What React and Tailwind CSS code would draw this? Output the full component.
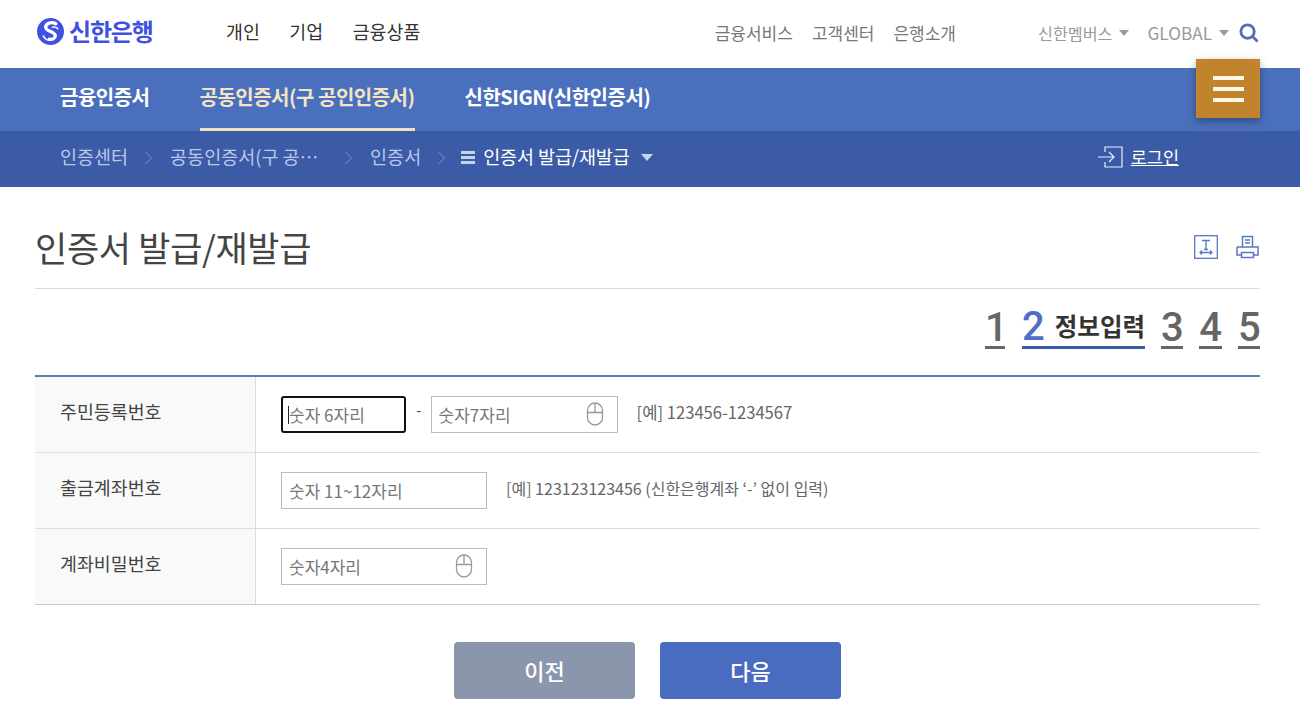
import React from 'react';

const FONT = "font-['Noto_Sans_CJK_KR','Noto_Sans',sans-serif]";
const DIGIT = "font-['Roboto','Noto_Sans_CJK_KR',sans-serif]";

const GNB = ['개인', '기업', '금융상품'];
const UTIL = ['금융서비스', '고객센터', '은행소개'];

function Logo() {
  return (
    <div className="flex items-center gap-[5px]">
      <svg width="27" height="27" viewBox="0 0 28 28">
        <circle cx="14" cy="14" r="14" fill="#3f51e0" />
        <path d="M19.500 6C15 3.500 9 5.500 9 9.500c0 4.500 10 4.500 10 9 0 2.500-3 4-6 3.500" fill="none" stroke="#fff" strokeWidth="3.400" strokeLinecap="round" />
        <path d="M6.500 18.500c1.500 3 4 4.500 6.500 4.500M16 9.500c2-.5 4 0 5.500 1.500" fill="none" stroke="#fff" strokeWidth="1.600" strokeLinecap="round" />
      </svg>
      <span className="text-[24px] leading-none font-bold tracking-[-1.2px] text-[#3f51e0]">신한은행</span>
    </div>
  );
}

function Caret({ className }) {
  return <span className={`inline-block w-0 h-0 border-x-[5px] border-x-transparent border-t-[6px] ${className}`} />;
}

function Chevron() {
  return (
    <svg width="10" height="14" viewBox="0 0 10 14" fill="none" stroke="#5f7cbd" strokeWidth="1.300">
      <path d="M1.500 1l6 6-6 6" />
    </svg>
  );
}

function MouseIcon() {
  return (
    <svg width="18" height="24" viewBox="0 0 18 24" fill="none" stroke="#999" strokeWidth="1.300">
      <rect x="1.500" y="1" width="15" height="22" rx="7.500" />
      <path d="M1.500 10.500h15M9 1v9.500" />
    </svg>
  );
}

function Step({ n, className }) {
  return (
    <span className={`${DIGIT} text-center pt-[2px] border-b-[3px] border-[#666] text-[40px] leading-[40px] font-medium text-[#666] h-[43px] ${className}`}>{n}</span>
  );
}

function Field({ placeholder, className, icon }) {
  return (
    <div className={`relative h-[37px] border border-[#bbb] ${className}`}>
      <input
        placeholder={placeholder}
        className="w-full h-full pl-[7px] text-[17px] placeholder:text-[#777] outline-none"
      />
      {icon && <div className="absolute right-[13px] top-[5px]"><MouseIcon /></div>}
    </div>
  );
}

function Row({ label, children, last }) {
  return (
    <div className={`flex h-[76px] border-b ${last ? 'border-[#c3c8dc]' : 'border-[#ddd]'}`}>
      <div className="w-[221px] shrink-0 bg-[#f9f9f9] border-r border-[#ddd] pl-[25px] pt-[20px] text-[18.400px] leading-[28px] text-[#444]">
        {label}
      </div>
      <div className="flex items-start pl-[25px] pt-[19px]">{children}</div>
    </div>
  );
}

export default function App() {
  return (
    <div className={`${FONT} h-[727px] overflow-hidden bg-white text-[#333]`}>
      <header className="flex items-center h-[68px] pl-[37px] pr-[41px]">
        <div className="w-[189px] -mt-[6px]"><Logo /></div>
        <nav className="flex gap-[29.500px] -mt-[5px] text-[18.400px] text-[#333]">
          {GNB.map(item => <span key={item}>{item}</span>)}
        </nav>
        <div className="ml-auto flex items-center -mt-[2px] text-[#777]">
          <div className="flex gap-[19px] text-[17px] mr-[82px]">
            {UTIL.map(item => <span key={item}>{item}</span>)}
          </div>
          <span className="text-[16.200px] text-[#999] mr-[7px]">신한멤버스</span>
          <Caret className="border-t-[#999] mr-[18px]" />
          <span className="text-[17.200px] text-[#999] mr-[7px]">GLOBAL</span>
          <Caret className="border-t-[#999] mr-[10px]" />
          <svg width="20" height="20" viewBox="0 0 21 21" fill="none" stroke="#5b6bb8" strokeWidth="3">
            <circle cx="9" cy="9" r="7" />
            <path d="M14 14l5.500 5.500" />
          </svg>
        </div>
      </header>

      <div className="relative flex h-[63px] bg-[#4a6fbc] pl-[60px] gap-[50px] text-[20px] font-bold tracking-[-0.5px] text-white">
        <span className="pt-[14px] leading-[30px]">금융인증서</span>
        <span className="pt-[14px] leading-[30px] h-[63px] border-b-[3px] border-[#efe2c4] text-[#f3e5c3]">공동인증서(구 공인인증서)</span>
        <span className="pt-[14px] leading-[30px]">신한SIGN(신한인증서)</span>
        <button className="absolute right-[40px] -top-[9px] w-[64px] h-[59px] bg-[#c1832b] flex flex-col items-center justify-center gap-[7px] shadow-[0_3px_8px_rgba(0,0,0,0.35)]">
          <span className="block w-[31px] h-[4px] bg-[#fff8e8]" />
          <span className="block w-[31px] h-[4px] bg-[#fff8e8]" />
          <span className="block w-[31px] h-[4px] bg-[#fff8e8]" />
        </button>
      </div>

      <div className="flex items-center h-[56px] pb-[4px] pl-[60px] pr-[121px] bg-[#3c5ba6] text-[18.500px] text-[#b9c8e8]">
        <span>인증센터</span>
        <span className="ml-[16px] mr-[16px] mt-[2px]"><Chevron /></span>
        <span className="w-[148px] whitespace-nowrap">공동인증서(구 공…</span>
        <span className="ml-[26px] mr-[16px] mt-[2px]"><Chevron /></span>
        <span>인증서</span>
        <span className="ml-[16px] mr-[14px] mt-[2px]"><Chevron /></span>
        <span className="flex flex-col gap-[2px] mr-[8px] mt-[1px]">
          <span className="block w-[14px] h-[3px] bg-[#c5d2ee]" />
          <span className="block w-[14px] h-[3px] bg-[#c5d2ee]" />
          <span className="block w-[14px] h-[3px] bg-[#c5d2ee]" />
        </span>
        <span className="text-white tracking-[-0.1px]">인증서 발급/재발급</span>
        <Caret className="ml-[11px] border-t-[#c5d6f5] border-x-[6.500px] border-t-[7px]" />
        <div className="ml-auto flex items-center gap-[8px] text-[17.500px] text-white">
          <svg width="25" height="22" viewBox="0 0 25 22" fill="none" stroke="#e8eefb" strokeWidth="1.200">
            <path d="M7 6V1h17v20H7v-5M0 11h16M11 6l5 5-5 5" />
          </svg>
          <span className="underline underline-offset-[1px] decoration-1">로그인</span>
        </div>
      </div>

      <main className="pl-[35px] pr-[40px]">
        <div className="flex items-center justify-between h-[102px] pt-[18px] border-b border-[#ddd]">
          <h1 className="text-[35px] leading-[50px] tracking-[-0.3px] text-[#444]">인증서 발급/재발급</h1>
          <div className="flex items-center gap-[18px] pr-[1px]">
            <svg width="24" height="24" viewBox="0 0 24 24" fill="none" stroke="#5a78bd" strokeWidth="1.300">
              <rect x=".7" y=".7" width="22.600" height="22.600" />
              <path d="M8 5.500h8M12 5.500v9M10 14.500h4M6 17.500h12M8 15.500l-2 2 2 2M16 15.500l2 2-2 2" />
            </svg>
            <svg width="23" height="24" viewBox="0 0 23 24" fill="none" stroke="#5a78bd" strokeWidth="1.500">
              <path d="M6.500 12V1.500h10V12M1 12h21v8h-4M5 20H1v-8M5.500 17.500h12v5h-12zM9 5h5M9 8h5" />
            </svg>
          </div>
        </div>

        <div className="flex items-start justify-end gap-[16px] h-[88px] pt-[17px] border-b-[2px] border-[#5d7bb4]">
          <Step n="1" className="w-[20px]" />
          <span className="ml-[1px] flex items-center gap-[10px] border-b-[3px] border-[#3c5ba6] h-[43px]">
            <span className={`${DIGIT} pt-[2px] text-[40px] leading-[40px] font-medium text-[#4d70c6]`}>2</span>
            <span className="text-[24.500px] font-bold text-[#333]">정보입력</span>
          </span>
          <Step n="3" className="w-[22px]" />
          <Step n="4" className="w-[23px]" />
          <Step n="5" className="w-[22px]" />
        </div>

        <div>
          <Row label="주민등록번호">
            <div className="relative w-[125px] h-[37px] border-2 border-[#111] rounded-[3px]">
              <input placeholder="숫자 6자리" className="w-full h-full pl-[6px] text-[17px] placeholder:text-[#777] outline-none" />
              <span className="absolute left-[5px] top-[8px] w-[1px] h-[18px] bg-[#222]" />
            </div>
            <span className="ml-[10px] mr-[9px] mt-[1px] text-[16px] text-[#555]">-</span>
            <Field placeholder="숫자7자리" className="w-[187px]" icon />
            <span className="ml-[19px] mt-[5px] text-[16.600px] leading-[22px] text-[#666]">[예] 123456-1234567</span>
          </Row>
          <Row label="출금계좌번호">
            <Field placeholder="숫자 11~12자리" className="w-[206px]" />
            <span className="ml-[19px] mt-[5px] text-[16px] leading-[22px] text-[#666]">[예] 123123123456 (신한은행계좌 ‘-’ 없이 입력)</span>
          </Row>
          <Row label="계좌비밀번호" last>
            <Field placeholder="숫자4자리" className="w-[206px]" icon />
          </Row>
        </div>

        <div className="flex justify-center gap-[25px] mt-[37px]">
          <button className="w-[181px] h-[57px] rounded-[4px] bg-[#8a96ab] text-[22px] font-medium text-white">이전</button>
          <button className="w-[181px] h-[57px] rounded-[4px] bg-[#4a6cc0] text-[22px] font-medium text-white">다음</button>
        </div>
      </main>
    </div>
  );
}
